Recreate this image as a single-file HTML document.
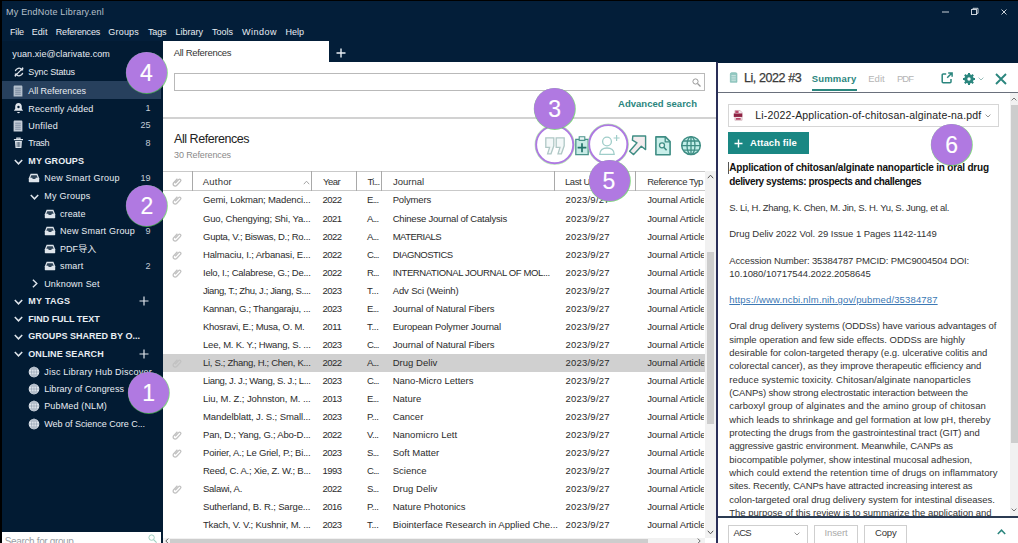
<!DOCTYPE html><html><head><meta charset="utf-8"><title>My EndNote Library.enl</title><style>
html,body{margin:0;padding:0;background:#021b33;}
#app{position:relative;width:1018px;height:543px;overflow:hidden;background:#021b33;font-family:"Liberation Sans","Noto Sans CJK SC",sans-serif;}
.t,.tn{position:absolute;white-space:nowrap;}
.b{position:absolute;}
svg{position:absolute;overflow:visible;}
.num{position:absolute;width:41px;height:41px;border-radius:50%;background:#b079e1;color:#fff;text-align:center;font-size:23px;line-height:42px;box-shadow:0.3px 0.4px 0 0.5px rgba(90,200,90,0.75);-webkit-text-stroke:0.15px #fff;}
.ring{position:absolute;border-radius:50%;background:rgba(255,255,255,0.5);border:1.9px solid #ae78e2;box-shadow:0 0 0 0.7px rgba(150,225,140,0.8);box-sizing:content-box;}

</style></head><body><div id="app">
<div class="b" style="left:0px;top:0px;width:1018px;height:41px;background:#031e39;"></div>
<div class="b" style="left:163px;top:41px;width:855px;height:21.5px;background:#031e39;"></div>
<div class="b" style="left:0px;top:0px;width:1018px;height:1.3px;background:#000;"></div>
<div class="b" style="left:0px;top:0px;width:1.6px;height:543px;background:#000;"></div>
<div class="b" style="left:715.3px;top:62.3px;width:3.1000000000000227px;height:480.7px;background:#2a2f58;"></div>
<div class="b" style="left:163.3px;top:41px;width:165.7px;height:22px;background:#fff;"></div>
<div class="b" style="left:163.3px;top:62.3px;width:552.3px;height:480.7px;background:#fff;"></div>
<div class="b" style="left:718.4px;top:62.6px;width:299.6px;height:480.4px;background:#fff;"></div>
<span class="t" style="left:6.0px;top:6.0px;font-size:9px;line-height:12px;color:#b7c0cb;letter-spacing:0.21px;">My EndNote Library.enl</span>
<span class="t" style="left:10.0px;top:25.7px;font-size:9px;line-height:12px;color:#e9eef4;letter-spacing:-0.13px;">File</span>
<span class="t" style="left:31.7px;top:25.7px;font-size:9px;line-height:12px;color:#e9eef4;letter-spacing:0.07px;">Edit</span>
<span class="t" style="left:55.8px;top:25.7px;font-size:9px;line-height:12px;color:#e9eef4;letter-spacing:-0.18px;">References</span>
<span class="t" style="left:108.3px;top:25.7px;font-size:9px;line-height:12px;color:#e9eef4;letter-spacing:0.20px;">Groups</span>
<span class="t" style="left:148.0px;top:25.7px;font-size:9px;line-height:12px;color:#e9eef4;letter-spacing:-0.13px;">Tags</span>
<span class="t" style="left:175.4px;top:25.7px;font-size:9px;line-height:12px;color:#e9eef4;letter-spacing:0.01px;">Library</span>
<span class="t" style="left:212.0px;top:25.7px;font-size:9px;line-height:12px;color:#e9eef4;">Tools</span>
<span class="t" style="left:242.0px;top:25.7px;font-size:9px;line-height:12px;color:#e9eef4;letter-spacing:0.50px;">Window</span>
<span class="t" style="left:285.6px;top:25.7px;font-size:9px;line-height:12px;color:#e9eef4;letter-spacing:-0.03px;">Help</span>
<svg style="left:940px;top:6px" width="70" height="12" viewBox="0 0 70 12"><g stroke="#c9d0d8" stroke-width="1" fill="none"><path d="M2 6h7"/><rect x="31.5" y="3.5" width="5" height="5"/><path d="M33 3.5v-1.2h5v5h-1.2"/><path d="M61.5 3.5l5 5M66.5 3.5l-5 5"/></g></svg>
<div class="b" style="left:1.6px;top:80.8px;width:159.9px;height:17.799999999999997px;background:#27405d;"></div>
<span class="t" style="left:12.3px;top:48.0px;font-size:9px;line-height:12px;color:#e9eef4;letter-spacing:0.09px;">yuan.xie@clarivate.com</span>
<span class="t" style="left:28.3px;top:65.5px;font-size:9px;line-height:12px;color:#e9eef4;letter-spacing:-0.12px;">Sync Status</span>
<span class="t" style="left:28.3px;top:84.5px;font-size:9px;line-height:12px;color:#e9eef4;letter-spacing:-0.06px;">All References</span>
<span class="t" style="left:28.3px;top:102.5px;font-size:9px;line-height:12px;color:#e9eef4;letter-spacing:0.15px;">Recently Added</span>
<span class="tn" style="right:867.5px;top:102.0px;font-size:9px;line-height:13px;color:#c3ccd6">1</span>
<span class="t" style="left:28.3px;top:119.7px;font-size:9px;line-height:12px;color:#e9eef4;letter-spacing:0.24px;">Unfiled</span>
<span class="tn" style="right:867.5px;top:119.2px;font-size:9px;line-height:13px;color:#c3ccd6">25</span>
<span class="t" style="left:28.3px;top:137.0px;font-size:9px;line-height:12px;color:#e9eef4;letter-spacing:-0.39px;">Trash</span>
<span class="tn" style="right:867.5px;top:136.5px;font-size:9px;line-height:13px;color:#c3ccd6">8</span>
<span class="t" style="left:28.3px;top:155.0px;font-size:9px;line-height:12px;color:#e9eef4;font-weight:700;letter-spacing:0.10px;">MY GROUPS</span>
<span class="t" style="left:44.2px;top:172.3px;font-size:9px;line-height:12px;color:#e9eef4;letter-spacing:0.23px;">New Smart Group</span>
<span class="tn" style="right:867.5px;top:171.8px;font-size:9px;line-height:13px;color:#c3ccd6">19</span>
<span class="t" style="left:44.2px;top:190.3px;font-size:9px;line-height:12px;color:#e9eef4;letter-spacing:0.25px;">My Groups</span>
<span class="t" style="left:60.0px;top:207.7px;font-size:9px;line-height:12px;color:#e9eef4;letter-spacing:0.08px;">create</span>
<span class="t" style="left:60.0px;top:225.3px;font-size:9px;line-height:12px;color:#e9eef4;letter-spacing:0.20px;">New Smart Group</span>
<span class="tn" style="right:867.5px;top:224.8px;font-size:9px;line-height:13px;color:#c3ccd6">9</span>
<span class="t" style="left:60.0px;top:242.7px;font-size:9px;line-height:12px;color:#e9eef4;letter-spacing:0.06px;">PDF导入</span>
<span class="t" style="left:60.0px;top:260.2px;font-size:9px;line-height:12px;color:#e9eef4;letter-spacing:0.16px;">smart</span>
<span class="tn" style="right:867.5px;top:259.7px;font-size:9px;line-height:13px;color:#c3ccd6">2</span>
<span class="t" style="left:44.2px;top:277.7px;font-size:9px;line-height:12px;color:#e9eef4;letter-spacing:0.18px;">Unknown Set</span>
<span class="t" style="left:28.3px;top:295.2px;font-size:9px;line-height:12px;color:#e9eef4;font-weight:700;letter-spacing:0.26px;">MY TAGS</span>
<span class="t" style="left:28.3px;top:312.5px;font-size:9px;line-height:12px;color:#e9eef4;font-weight:700;letter-spacing:-0.03px;">FIND FULL TEXT</span>
<span class="t" style="left:28.3px;top:330.3px;font-size:9px;line-height:12px;color:#e9eef4;font-weight:700;letter-spacing:0.02px;">GROUPS SHARED BY O...</span>
<span class="t" style="left:28.3px;top:347.7px;font-size:9px;line-height:12px;color:#e9eef4;font-weight:700;letter-spacing:0.07px;">ONLINE SEARCH</span>
<span class="t" style="left:44.2px;top:365.7px;font-size:9px;line-height:12px;color:#e9eef4;letter-spacing:0.23px;">Jisc Library Hub Discover</span>
<span class="t" style="left:44.2px;top:382.7px;font-size:9px;line-height:12px;color:#e9eef4;letter-spacing:0.07px;">Library of Congress</span>
<span class="t" style="left:44.2px;top:400.3px;font-size:9px;line-height:12px;color:#e9eef4;letter-spacing:0.15px;">PubMed (NLM)</span>
<span class="t" style="left:44.2px;top:417.8px;font-size:9px;line-height:12px;color:#e9eef4;letter-spacing:-0.02px;">Web of Science Core C...</span>
<div class="b" style="left:2px;top:531.5px;width:159px;height:11.5px;background:#fff;"></div>
<span class="t" style="left:4.8px;top:534.5px;font-size:10px;line-height:13px;color:#9aa0a6;letter-spacing:-0.36px;">Search for group</span>
<span class="t" style="left:173.8px;top:47.0px;font-size:9.5px;line-height:12px;color:#333;letter-spacing:-0.31px;">All References</span>
<svg style="left:336px;top:48px" width="10" height="10" viewBox="0 0 10 10"><path d="M5 0.5v9M0.5 5h9" stroke="#e9eef4" stroke-width="1.4"/></svg>
<div class="b" style="left:173.8px;top:73.3px;width:531.0px;height:17.700000000000003px;background:#fff;box-sizing:border-box;border:1px solid #b9b9b9;"></div>
<svg style="left:692px;top:78px" width="9" height="9" viewBox="0 0 9 9"><circle cx="3.5" cy="3.5" r="2.6" fill="none" stroke="#9a9a9a" stroke-width="1"/><path d="M5.5 5.5l3 3" stroke="#9a9a9a" stroke-width="1.2"/></svg>
<span class="t" style="left:618.0px;top:98.2px;font-size:9.5px;line-height:12px;color:#2a857d;font-weight:700;letter-spacing:0.02px;">Advanced search</span>
<div class="b" style="left:163.3px;top:117.3px;width:552.3px;height:1.5px;background:#d2d2d2;"></div>
<span class="t" style="left:174.0px;top:130.8px;font-size:12.5px;line-height:16px;color:#222;letter-spacing:-0.45px;">All References</span>
<span class="t" style="left:174.0px;top:149.3px;font-size:9px;line-height:12px;color:#8a8a8a;letter-spacing:-0.12px;">30 References</span>
<div class="b" style="left:163.3px;top:170.6px;width:541.7px;height:1.0px;background:#c9c9c9;"></div>
<div class="b" style="left:163.3px;top:190px;width:541.7px;height:1px;background:#c9c9c9;"></div>
<div class="b" style="left:192.1px;top:171px;width:1.0px;height:19.5px;background:#a9a9a9;"></div>
<div class="b" style="left:310.5px;top:171px;width:1.0px;height:19.5px;background:#a9a9a9;"></div>
<div class="b" style="left:356.2px;top:171px;width:1.0px;height:19.5px;background:#a9a9a9;"></div>
<div class="b" style="left:381.3px;top:171px;width:1.0px;height:19.5px;background:#a9a9a9;"></div>
<div class="b" style="left:554.1px;top:171px;width:1.0px;height:19.5px;background:#a9a9a9;"></div>
<div class="b" style="left:635.1px;top:171px;width:1.0px;height:19.5px;background:#a9a9a9;"></div>
<span class="t" style="left:202.8px;top:176.0px;font-size:9.5px;line-height:12px;color:#333;letter-spacing:0.20px;">Author</span>
<span class="t" style="left:323.0px;top:176.0px;font-size:9.5px;line-height:12px;color:#333;letter-spacing:-0.55px;">Year</span>
<span class="t" style="left:367.5px;top:176.0px;font-size:9.5px;line-height:12px;color:#333;letter-spacing:-0.70px;">Ti...</span>
<span class="t" style="left:393.0px;top:176.0px;font-size:9.5px;line-height:12px;color:#333;letter-spacing:-0.02px;">Journal</span>
<span class="t" style="left:565.0px;top:176.0px;font-size:9.5px;line-height:12px;color:#333;letter-spacing:-0.41px;">Last U</span>
<span class="t" style="left:647.2px;top:176.0px;font-size:9.5px;line-height:12px;color:#333;letter-spacing:-0.45px;">Reference Typ</span>
<div class="b" style="left:163.3px;top:354px;width:541.7px;height:18px;background:#d0d0d0;"></div>
<svg style="left:173px;top:195.4px" width="9" height="10" viewBox="0 0 9 10"><path d="M2.2 6.2l3.4-3.6a1.3 1.3 0 0 1 1.9 1.8L3.6 8.5a2 2 0 0 1-2.9-2.8L4.4 1.8" fill="none" stroke="#c2c2c2" stroke-width="1.300"/></svg>
<span class="t" style="left:203.0px;top:194.4px;font-size:9.5px;line-height:12px;color:#2b2b2b;letter-spacing:-0.14px;">Gemi, Lokman; Madenci...</span>
<span class="t" style="left:322.4px;top:194.4px;font-size:9.5px;line-height:12px;color:#2b2b2b;letter-spacing:-0.51px;">2022</span>
<span class="t" style="left:367.0px;top:194.4px;font-size:9.5px;line-height:12px;color:#2b2b2b;letter-spacing:-0.69px;">E...</span>
<span class="t" style="left:392.7px;top:194.4px;font-size:9.5px;line-height:12px;color:#2b2b2b;letter-spacing:-0.15px;">Polymers</span>
<span class="t" style="left:565.4px;top:194.4px;font-size:9.5px;line-height:12px;color:#2b2b2b;letter-spacing:0.24px;">2023/9/27</span>
<span class="t" style="left:647.2px;top:194.4px;font-size:9.5px;line-height:12px;color:#2b2b2b;letter-spacing:-0.09px;clip-path:inset(0 1.5px 0 0);">Journal Article</span>
<span class="t" style="left:203.0px;top:212.5px;font-size:9.5px;line-height:12px;color:#2b2b2b;letter-spacing:-0.16px;">Guo, Chengying; Shi, Ya...</span>
<span class="t" style="left:322.4px;top:212.5px;font-size:9.5px;line-height:12px;color:#2b2b2b;letter-spacing:-0.51px;">2021</span>
<span class="t" style="left:367.0px;top:212.5px;font-size:9.5px;line-height:12px;color:#2b2b2b;letter-spacing:-0.69px;">A...</span>
<span class="t" style="left:392.7px;top:212.5px;font-size:9.5px;line-height:12px;color:#2b2b2b;letter-spacing:-0.22px;">Chinese Journal of Catalysis</span>
<span class="t" style="left:565.4px;top:212.5px;font-size:9.5px;line-height:12px;color:#2b2b2b;letter-spacing:0.24px;">2023/9/27</span>
<span class="t" style="left:647.2px;top:212.5px;font-size:9.5px;line-height:12px;color:#2b2b2b;letter-spacing:-0.09px;clip-path:inset(0 1.5px 0 0);">Journal Article</span>
<svg style="left:173px;top:231.5px" width="9" height="10" viewBox="0 0 9 10"><path d="M2.2 6.2l3.4-3.6a1.3 1.3 0 0 1 1.9 1.8L3.6 8.5a2 2 0 0 1-2.9-2.8L4.4 1.8" fill="none" stroke="#c2c2c2" stroke-width="1.300"/></svg>
<span class="t" style="left:203.0px;top:230.5px;font-size:9.5px;line-height:12px;color:#2b2b2b;letter-spacing:-0.26px;">Gupta, V.; Biswas, D.; Ro...</span>
<span class="t" style="left:322.4px;top:230.5px;font-size:9.5px;line-height:12px;color:#2b2b2b;letter-spacing:-0.51px;">2022</span>
<span class="t" style="left:367.0px;top:230.5px;font-size:9.5px;line-height:12px;color:#2b2b2b;letter-spacing:-0.69px;">A...</span>
<span class="t" style="left:392.7px;top:230.5px;font-size:9.5px;line-height:12px;color:#2b2b2b;letter-spacing:-0.53px;">MATERIALS</span>
<span class="t" style="left:565.4px;top:230.5px;font-size:9.5px;line-height:12px;color:#2b2b2b;letter-spacing:0.24px;">2023/9/27</span>
<span class="t" style="left:647.2px;top:230.5px;font-size:9.5px;line-height:12px;color:#2b2b2b;letter-spacing:-0.09px;clip-path:inset(0 1.5px 0 0);">Journal Article</span>
<svg style="left:173px;top:249.55px" width="9" height="10" viewBox="0 0 9 10"><path d="M2.2 6.2l3.4-3.6a1.3 1.3 0 0 1 1.9 1.8L3.6 8.5a2 2 0 0 1-2.9-2.8L4.4 1.8" fill="none" stroke="#c2c2c2" stroke-width="1.300"/></svg>
<span class="t" style="left:203.0px;top:248.6px;font-size:9.5px;line-height:12px;color:#2b2b2b;letter-spacing:-0.16px;">Halmaciu, I.; Arbanasi, E...</span>
<span class="t" style="left:322.4px;top:248.6px;font-size:9.5px;line-height:12px;color:#2b2b2b;letter-spacing:-0.51px;">2022</span>
<span class="t" style="left:367.0px;top:248.6px;font-size:9.5px;line-height:12px;color:#2b2b2b;letter-spacing:-0.82px;">C...</span>
<span class="t" style="left:392.7px;top:248.6px;font-size:9.5px;line-height:12px;color:#2b2b2b;letter-spacing:-0.50px;">DIAGNOSTICS</span>
<span class="t" style="left:565.4px;top:248.6px;font-size:9.5px;line-height:12px;color:#2b2b2b;letter-spacing:0.24px;">2023/9/27</span>
<span class="t" style="left:647.2px;top:248.6px;font-size:9.5px;line-height:12px;color:#2b2b2b;letter-spacing:-0.09px;clip-path:inset(0 1.5px 0 0);">Journal Article</span>
<svg style="left:173px;top:267.6px" width="9" height="10" viewBox="0 0 9 10"><path d="M2.2 6.2l3.4-3.6a1.3 1.3 0 0 1 1.9 1.8L3.6 8.5a2 2 0 0 1-2.9-2.8L4.4 1.8" fill="none" stroke="#c2c2c2" stroke-width="1.300"/></svg>
<span class="t" style="left:203.0px;top:266.6px;font-size:9.5px;line-height:12px;color:#2b2b2b;letter-spacing:-0.25px;">Ielo, I.; Calabrese, G.; De...</span>
<span class="t" style="left:322.4px;top:266.6px;font-size:9.5px;line-height:12px;color:#2b2b2b;letter-spacing:-0.51px;">2022</span>
<span class="t" style="left:367.0px;top:266.6px;font-size:9.5px;line-height:12px;color:#2b2b2b;letter-spacing:-0.82px;">R...</span>
<span class="t" style="left:392.7px;top:266.6px;font-size:9.5px;line-height:12px;color:#2b2b2b;letter-spacing:-0.37px;">INTERNATIONAL JOURNAL OF MOL...</span>
<span class="t" style="left:565.4px;top:266.6px;font-size:9.5px;line-height:12px;color:#2b2b2b;letter-spacing:0.24px;">2023/9/27</span>
<span class="t" style="left:647.2px;top:266.6px;font-size:9.5px;line-height:12px;color:#2b2b2b;letter-spacing:-0.09px;clip-path:inset(0 1.5px 0 0);">Journal Article</span>
<span class="t" style="left:203.0px;top:284.6px;font-size:9.5px;line-height:12px;color:#2b2b2b;letter-spacing:-0.38px;">Jiang, T.; Zhu, J.; Jiang, S....</span>
<span class="t" style="left:322.4px;top:284.6px;font-size:9.5px;line-height:12px;color:#2b2b2b;letter-spacing:-0.51px;">2023</span>
<span class="t" style="left:367.0px;top:284.6px;font-size:9.5px;line-height:12px;color:#2b2b2b;letter-spacing:-0.29px;">T...</span>
<span class="t" style="left:392.7px;top:284.6px;font-size:9.5px;line-height:12px;color:#2b2b2b;letter-spacing:-0.14px;">Adv Sci (Weinh)</span>
<span class="t" style="left:565.4px;top:284.6px;font-size:9.5px;line-height:12px;color:#2b2b2b;letter-spacing:0.24px;">2023/9/27</span>
<span class="t" style="left:647.2px;top:284.6px;font-size:9.5px;line-height:12px;color:#2b2b2b;letter-spacing:-0.09px;clip-path:inset(0 1.5px 0 0);">Journal Article</span>
<span class="t" style="left:203.0px;top:302.7px;font-size:9.5px;line-height:12px;color:#2b2b2b;letter-spacing:-0.26px;">Kannan, G.; Thangaraju, ...</span>
<span class="t" style="left:322.4px;top:302.7px;font-size:9.5px;line-height:12px;color:#2b2b2b;letter-spacing:-0.51px;">2023</span>
<span class="t" style="left:367.0px;top:302.7px;font-size:9.5px;line-height:12px;color:#2b2b2b;letter-spacing:-0.69px;">E...</span>
<span class="t" style="left:392.7px;top:302.7px;font-size:9.5px;line-height:12px;color:#2b2b2b;letter-spacing:-0.09px;">Journal of Natural Fibers</span>
<span class="t" style="left:565.4px;top:302.7px;font-size:9.5px;line-height:12px;color:#2b2b2b;letter-spacing:0.24px;">2023/9/27</span>
<span class="t" style="left:647.2px;top:302.7px;font-size:9.5px;line-height:12px;color:#2b2b2b;letter-spacing:-0.09px;clip-path:inset(0 1.5px 0 0);">Journal Article</span>
<span class="t" style="left:203.0px;top:320.8px;font-size:9.5px;line-height:12px;color:#2b2b2b;letter-spacing:-0.27px;">Khosravi, E.; Musa, O. M.</span>
<span class="t" style="left:322.4px;top:320.8px;font-size:9.5px;line-height:12px;color:#2b2b2b;letter-spacing:-0.33px;">2011</span>
<span class="t" style="left:367.0px;top:320.8px;font-size:9.5px;line-height:12px;color:#2b2b2b;letter-spacing:-0.29px;">T...</span>
<span class="t" style="left:392.7px;top:320.8px;font-size:9.5px;line-height:12px;color:#2b2b2b;letter-spacing:-0.18px;">European Polymer Journal</span>
<span class="t" style="left:565.4px;top:320.8px;font-size:9.5px;line-height:12px;color:#2b2b2b;letter-spacing:0.24px;">2023/9/27</span>
<span class="t" style="left:647.2px;top:320.8px;font-size:9.5px;line-height:12px;color:#2b2b2b;letter-spacing:-0.09px;clip-path:inset(0 1.5px 0 0);">Journal Article</span>
<span class="t" style="left:203.0px;top:338.8px;font-size:9.5px;line-height:12px;color:#2b2b2b;letter-spacing:-0.20px;">Lee, M. K. Y.; Hwang, S. ...</span>
<span class="t" style="left:322.4px;top:338.8px;font-size:9.5px;line-height:12px;color:#2b2b2b;letter-spacing:-0.51px;">2023</span>
<span class="t" style="left:367.0px;top:338.8px;font-size:9.5px;line-height:12px;color:#2b2b2b;letter-spacing:-0.82px;">C...</span>
<span class="t" style="left:392.7px;top:338.8px;font-size:9.5px;line-height:12px;color:#2b2b2b;letter-spacing:-0.09px;">Journal of Natural Fibers</span>
<span class="t" style="left:565.4px;top:338.8px;font-size:9.5px;line-height:12px;color:#2b2b2b;letter-spacing:0.24px;">2023/9/27</span>
<span class="t" style="left:647.2px;top:338.8px;font-size:9.5px;line-height:12px;color:#2b2b2b;letter-spacing:-0.09px;clip-path:inset(0 1.5px 0 0);">Journal Article</span>
<svg style="left:173px;top:357.85px" width="9" height="10" viewBox="0 0 9 10"><path d="M2.2 6.2l3.4-3.6a1.3 1.3 0 0 1 1.9 1.8L3.6 8.5a2 2 0 0 1-2.9-2.8L4.4 1.8" fill="none" stroke="#c2c2c2" stroke-width="1.300"/></svg>
<span class="t" style="left:203.0px;top:356.9px;font-size:9.5px;line-height:12px;color:#2b2b2b;letter-spacing:-0.30px;">Li, S.; Zhang, H.; Chen, K...</span>
<span class="t" style="left:322.4px;top:356.9px;font-size:9.5px;line-height:12px;color:#2b2b2b;letter-spacing:-0.51px;">2022</span>
<span class="t" style="left:367.0px;top:356.9px;font-size:9.5px;line-height:12px;color:#2b2b2b;letter-spacing:-0.69px;">A...</span>
<span class="t" style="left:392.7px;top:356.9px;font-size:9.5px;line-height:12px;color:#2b2b2b;letter-spacing:0.03px;">Drug Deliv</span>
<span class="t" style="left:565.4px;top:356.9px;font-size:9.5px;line-height:12px;color:#2b2b2b;letter-spacing:0.24px;">2023/9/27</span>
<span class="t" style="left:647.2px;top:356.9px;font-size:9.5px;line-height:12px;color:#2b2b2b;letter-spacing:-0.09px;clip-path:inset(0 1.5px 0 0);">Journal Article</span>
<span class="t" style="left:203.0px;top:374.9px;font-size:9.5px;line-height:12px;color:#2b2b2b;letter-spacing:-0.35px;">Liang, J. J.; Wang, S. J.; L...</span>
<span class="t" style="left:322.4px;top:374.9px;font-size:9.5px;line-height:12px;color:#2b2b2b;letter-spacing:-0.51px;">2023</span>
<span class="t" style="left:367.0px;top:374.9px;font-size:9.5px;line-height:12px;color:#2b2b2b;letter-spacing:-0.82px;">C...</span>
<span class="t" style="left:392.7px;top:374.9px;font-size:9.5px;line-height:12px;color:#2b2b2b;">Nano-Micro Letters</span>
<span class="t" style="left:565.4px;top:374.9px;font-size:9.5px;line-height:12px;color:#2b2b2b;letter-spacing:0.24px;">2023/9/27</span>
<span class="t" style="left:647.2px;top:374.9px;font-size:9.5px;line-height:12px;color:#2b2b2b;letter-spacing:-0.09px;clip-path:inset(0 1.5px 0 0);">Journal Article</span>
<span class="t" style="left:203.0px;top:393.0px;font-size:9.5px;line-height:12px;color:#2b2b2b;letter-spacing:-0.08px;">Liu, M. Z.; Johnston, M. ...</span>
<span class="t" style="left:322.4px;top:393.0px;font-size:9.5px;line-height:12px;color:#2b2b2b;letter-spacing:-0.51px;">2013</span>
<span class="t" style="left:367.0px;top:393.0px;font-size:9.5px;line-height:12px;color:#2b2b2b;letter-spacing:-0.69px;">E...</span>
<span class="t" style="left:392.7px;top:393.0px;font-size:9.5px;line-height:12px;color:#2b2b2b;">Nature</span>
<span class="t" style="left:565.4px;top:393.0px;font-size:9.5px;line-height:12px;color:#2b2b2b;letter-spacing:0.24px;">2023/9/27</span>
<span class="t" style="left:647.2px;top:393.0px;font-size:9.5px;line-height:12px;color:#2b2b2b;letter-spacing:-0.09px;clip-path:inset(0 1.5px 0 0);">Journal Article</span>
<span class="t" style="left:203.0px;top:411.0px;font-size:9.5px;line-height:12px;color:#2b2b2b;letter-spacing:-0.10px;">Mandelblatt, J. S.; Small...</span>
<span class="t" style="left:322.4px;top:411.0px;font-size:9.5px;line-height:12px;color:#2b2b2b;letter-spacing:-0.51px;">2023</span>
<span class="t" style="left:367.0px;top:411.0px;font-size:9.5px;line-height:12px;color:#2b2b2b;letter-spacing:-0.38px;">P...</span>
<span class="t" style="left:392.7px;top:411.0px;font-size:9.5px;line-height:12px;color:#2b2b2b;">Cancer</span>
<span class="t" style="left:565.4px;top:411.0px;font-size:9.5px;line-height:12px;color:#2b2b2b;letter-spacing:0.24px;">2023/9/27</span>
<span class="t" style="left:647.2px;top:411.0px;font-size:9.5px;line-height:12px;color:#2b2b2b;letter-spacing:-0.09px;clip-path:inset(0 1.5px 0 0);">Journal Article</span>
<svg style="left:173px;top:430.05px" width="9" height="10" viewBox="0 0 9 10"><path d="M2.2 6.2l3.4-3.6a1.3 1.3 0 0 1 1.9 1.8L3.6 8.5a2 2 0 0 1-2.9-2.8L4.4 1.8" fill="none" stroke="#c2c2c2" stroke-width="1.300"/></svg>
<span class="t" style="left:203.0px;top:429.1px;font-size:9.5px;line-height:12px;color:#2b2b2b;letter-spacing:-0.21px;">Pan, D.; Yang, G.; Abo-D...</span>
<span class="t" style="left:322.4px;top:429.1px;font-size:9.5px;line-height:12px;color:#2b2b2b;letter-spacing:-0.51px;">2022</span>
<span class="t" style="left:367.0px;top:429.1px;font-size:9.5px;line-height:12px;color:#2b2b2b;letter-spacing:-0.47px;">V...</span>
<span class="t" style="left:392.7px;top:429.1px;font-size:9.5px;line-height:12px;color:#2b2b2b;">Nanomicro Lett</span>
<span class="t" style="left:565.4px;top:429.1px;font-size:9.5px;line-height:12px;color:#2b2b2b;letter-spacing:0.24px;">2023/9/27</span>
<span class="t" style="left:647.2px;top:429.1px;font-size:9.5px;line-height:12px;color:#2b2b2b;letter-spacing:-0.09px;clip-path:inset(0 1.5px 0 0);">Journal Article</span>
<svg style="left:173px;top:448.1px" width="9" height="10" viewBox="0 0 9 10"><path d="M2.2 6.2l3.4-3.6a1.3 1.3 0 0 1 1.9 1.8L3.6 8.5a2 2 0 0 1-2.9-2.8L4.4 1.8" fill="none" stroke="#c2c2c2" stroke-width="1.300"/></svg>
<span class="t" style="left:203.0px;top:447.1px;font-size:9.5px;line-height:12px;color:#2b2b2b;letter-spacing:-0.20px;">Poirier, A.; Le Griel, P.; Bi...</span>
<span class="t" style="left:322.4px;top:447.1px;font-size:9.5px;line-height:12px;color:#2b2b2b;letter-spacing:-0.51px;">2023</span>
<span class="t" style="left:367.0px;top:447.1px;font-size:9.5px;line-height:12px;color:#2b2b2b;letter-spacing:-0.69px;">S...</span>
<span class="t" style="left:392.7px;top:447.1px;font-size:9.5px;line-height:12px;color:#2b2b2b;">Soft Matter</span>
<span class="t" style="left:565.4px;top:447.1px;font-size:9.5px;line-height:12px;color:#2b2b2b;letter-spacing:0.24px;">2023/9/27</span>
<span class="t" style="left:647.2px;top:447.1px;font-size:9.5px;line-height:12px;color:#2b2b2b;letter-spacing:-0.09px;clip-path:inset(0 1.5px 0 0);">Journal Article</span>
<span class="t" style="left:203.0px;top:465.1px;font-size:9.5px;line-height:12px;color:#2b2b2b;letter-spacing:-0.24px;">Reed, C. A.; Xie, Z. W.; B...</span>
<span class="t" style="left:322.4px;top:465.1px;font-size:9.5px;line-height:12px;color:#2b2b2b;letter-spacing:-0.51px;">1993</span>
<span class="t" style="left:367.0px;top:465.1px;font-size:9.5px;line-height:12px;color:#2b2b2b;letter-spacing:-0.82px;">C...</span>
<span class="t" style="left:392.7px;top:465.1px;font-size:9.5px;line-height:12px;color:#2b2b2b;">Science</span>
<span class="t" style="left:565.4px;top:465.1px;font-size:9.5px;line-height:12px;color:#2b2b2b;letter-spacing:0.24px;">2023/9/27</span>
<span class="t" style="left:647.2px;top:465.1px;font-size:9.5px;line-height:12px;color:#2b2b2b;letter-spacing:-0.09px;clip-path:inset(0 1.5px 0 0);">Journal Article</span>
<svg style="left:173px;top:484.20000000000005px" width="9" height="10" viewBox="0 0 9 10"><path d="M2.2 6.2l3.4-3.6a1.3 1.3 0 0 1 1.9 1.8L3.6 8.5a2 2 0 0 1-2.9-2.8L4.4 1.8" fill="none" stroke="#c2c2c2" stroke-width="1.300"/></svg>
<span class="t" style="left:203.0px;top:483.2px;font-size:9.5px;line-height:12px;color:#2b2b2b;letter-spacing:-0.27px;">Salawi, A.</span>
<span class="t" style="left:322.4px;top:483.2px;font-size:9.5px;line-height:12px;color:#2b2b2b;letter-spacing:-0.51px;">2022</span>
<span class="t" style="left:367.0px;top:483.2px;font-size:9.5px;line-height:12px;color:#2b2b2b;letter-spacing:-0.69px;">S...</span>
<span class="t" style="left:392.7px;top:483.2px;font-size:9.5px;line-height:12px;color:#2b2b2b;letter-spacing:0.03px;">Drug Deliv</span>
<span class="t" style="left:565.4px;top:483.2px;font-size:9.5px;line-height:12px;color:#2b2b2b;letter-spacing:0.24px;">2023/9/27</span>
<span class="t" style="left:647.2px;top:483.2px;font-size:9.5px;line-height:12px;color:#2b2b2b;letter-spacing:-0.09px;clip-path:inset(0 1.5px 0 0);">Journal Article</span>
<span class="t" style="left:203.0px;top:501.2px;font-size:9.5px;line-height:12px;color:#2b2b2b;letter-spacing:-0.13px;">Sutherland, B. R.; Sarge...</span>
<span class="t" style="left:322.4px;top:501.2px;font-size:9.5px;line-height:12px;color:#2b2b2b;letter-spacing:-0.51px;">2016</span>
<span class="t" style="left:367.0px;top:501.2px;font-size:9.5px;line-height:12px;color:#2b2b2b;letter-spacing:-0.38px;">P...</span>
<span class="t" style="left:392.7px;top:501.2px;font-size:9.5px;line-height:12px;color:#2b2b2b;">Nature Photonics</span>
<span class="t" style="left:565.4px;top:501.2px;font-size:9.5px;line-height:12px;color:#2b2b2b;letter-spacing:0.24px;">2023/9/27</span>
<span class="t" style="left:647.2px;top:501.2px;font-size:9.5px;line-height:12px;color:#2b2b2b;letter-spacing:-0.09px;clip-path:inset(0 1.5px 0 0);">Journal Article</span>
<span class="t" style="left:203.0px;top:519.3px;font-size:9.5px;line-height:12px;color:#2b2b2b;letter-spacing:-0.20px;">Tkach, V. V.; Kushnir, M. ...</span>
<span class="t" style="left:322.4px;top:519.3px;font-size:9.5px;line-height:12px;color:#2b2b2b;letter-spacing:-0.51px;">2023</span>
<span class="t" style="left:367.0px;top:519.3px;font-size:9.5px;line-height:12px;color:#2b2b2b;letter-spacing:-0.29px;">T...</span>
<span class="t" style="left:392.7px;top:519.3px;font-size:9.5px;line-height:12px;color:#2b2b2b;">Biointerface Research in Applied Che...</span>
<span class="t" style="left:565.4px;top:519.3px;font-size:9.5px;line-height:12px;color:#2b2b2b;letter-spacing:0.24px;">2023/9/27</span>
<span class="t" style="left:647.2px;top:519.3px;font-size:9.5px;line-height:12px;color:#2b2b2b;letter-spacing:-0.09px;clip-path:inset(0 1.5px 0 0);">Journal Article</span>
<div class="b" style="left:705px;top:171px;width:10.600000000000023px;height:367px;background:#f1f1f1;"></div>
<div class="b" style="left:706.5px;top:252px;width:7.5px;height:172px;background:#cdcdcd;"></div>
<svg style="left:707px;top:174px" width="7" height="5" viewBox="0 0 7 5"><path d="M0.8 4.2L3.5 1.2l2.7 3" fill="none" stroke="#555" stroke-width="1"/></svg>
<svg style="left:707px;top:530px" width="7" height="5" viewBox="0 0 7 5"><path d="M0.8 0.8L3.5 3.8l2.7-3" fill="none" stroke="#555" stroke-width="1"/></svg>
<div class="b" style="left:163.3px;top:537.5px;width:541.7px;height:5.5px;background:#f1f1f1;"></div>
<div class="b" style="left:170px;top:539px;width:478px;height:4px;background:#cdcdcd;"></div>
<svg style="left:164.5px;top:538px" width="4" height="6" viewBox="0 0 4 6"><path d="M3.2 0.6L0.8 3l2.4 2.4" fill="none" stroke="#555" stroke-width="0.9"/></svg>
<svg style="left:697px;top:538px" width="4" height="6" viewBox="0 0 4 6"><path d="M0.8 0.6L3.2 3l-2.4 2.4" fill="none" stroke="#555" stroke-width="0.9"/></svg>
<div class="b" style="left:718.4px;top:92.3px;width:299.6px;height:1.2000000000000028px;background:#6a707c;"></div>
<svg style="left:728.800px;top:72.200px" width="9.300" height="11.300" viewBox="0 0 10 13"><path d="M1.2 2.2c0-.8.6-1.4 1.4-1.4h4.8c.8 0 1.4.6 1.4 1.4v9.6H1.2z" fill="#93c8c1" stroke="#7dbab2" stroke-width="0.800"/><path d="M2.5 4h5M2.5 6h5M2.5 8h5M2.5 10h5" stroke="#e8f4f2" stroke-width="0.7"/></svg>
<span class="t" style="left:743.9px;top:70.3px;font-size:12.5px;line-height:16px;color:#3a3a3a;letter-spacing:-0.41px;-webkit-text-stroke:0.250px #3a3a3a;">Li, 2022 #3</span>
<span class="t" style="left:811.7px;top:72.5px;font-size:9.5px;line-height:12px;color:#2b867e;font-weight:700;letter-spacing:0.20px;">Summary</span>
<div class="b" style="left:811.5px;top:89px;width:45.0px;height:2px;background:#2b867e;"></div>
<span class="t" style="left:868.3px;top:72.5px;font-size:9.5px;line-height:12px;color:#b5b5b5;letter-spacing:-0.02px;">Edit</span>
<span class="t" style="left:897.0px;top:72.5px;font-size:9.5px;line-height:12px;color:#b5b5b5;letter-spacing:-1.00px;">PDF</span>
<svg style="left:941px;top:72px" width="12" height="12" viewBox="0 0 12 12"><path d="M5.2 2H2.2a1 1 0 0 0-1 1v6.8a1 1 0 0 0 1 1H9a1 1 0 0 0 1-1V6.9" fill="none" stroke="#2b867e" stroke-width="1.5"/><path d="M6.2 5.8L11 1M7.2 0.9h3.9v3.9" fill="none" stroke="#2b867e" stroke-width="1.5"/></svg>
<svg style="left:962.5px;top:72.5px" width="12" height="12" viewBox="0 0 12 12"><circle cx="6" cy="6" r="3.4" fill="none" stroke="#2b867e" stroke-width="2.6"/><g stroke="#2b867e" stroke-width="2"><path d="M6 0v12M0 6h12M1.8 1.8l8.4 8.4M10.2 1.8l-8.4 8.4"/></g><circle cx="6" cy="6" r="1.7" fill="#fff"/></svg>
<svg style="left:977.5px;top:76.5px" width="6" height="4" viewBox="0 0 6 4"><path d="M0.6 0.6L3 3l2.4-2.4" fill="none" stroke="#8fb9b4" stroke-width="0.9"/></svg>
<svg style="left:995px;top:72.5px" width="12" height="12" viewBox="0 0 12 12"><path d="M1 1l10 10M11 1L1 11" stroke="#2b867e" stroke-width="1.9"/></svg>
<div class="b" style="left:1009.6px;top:93.4px;width:8.399999999999977px;height:423.1px;background:#f1f1f1;"></div>
<div class="b" style="left:1010.5px;top:104.6px;width:7.5px;height:338.4px;background:#cdcdcd;"></div>
<svg style="left:1011px;top:96.5px" width="6" height="4" viewBox="0 0 6 4"><path d="M0.6 3.4L3 1l2.4 2.4" fill="none" stroke="#666" stroke-width="0.9"/></svg>
<svg style="left:1011px;top:508px" width="6" height="4" viewBox="0 0 6 4"><path d="M0.6 0.6L3 3l2.4-2.4" fill="none" stroke="#666" stroke-width="0.9"/></svg>
<div class="b" style="left:727.5px;top:104.2px;width:271.70000000000005px;height:22.39999999999999px;background:#fff;box-sizing:border-box;border:1px solid #d6d6d6;"></div>
<svg style="left:733.400px;top:109.800px" width="10.600" height="10.600" viewBox="0 0 11 11"><path d="M2 0.500h5.400L9.400 2.600v8H2z" fill="#f4e6ea" stroke="#c9a3ae" stroke-width="0.700"/><rect x="0.800" y="3.600" width="8.800" height="3.600" fill="#8e2344"/><path d="M2.400 0.800h3.400v2.400H2.400zM3 8.200h5v2H3z" fill="#b8486a"/></svg>
<span class="t" style="left:755.2px;top:108.0px;font-size:10.5px;line-height:14px;color:#222;letter-spacing:0.18px;">Li-2022-Application-of-chitosan-alginate-na.pdf</span>
<svg style="left:985px;top:113.5px" width="6" height="4" viewBox="0 0 6 4"><path d="M0.6 0.6L3 3l2.4-2.4" fill="none" stroke="#888" stroke-width="0.9"/></svg>
<div class="b" style="left:727.5px;top:132.3px;width:81.29999999999995px;height:21.5px;background:#1a8783;"></div>
<svg style="left:734px;top:139px" width="9" height="9" viewBox="0 0 9 9"><path d="M4.5 0.5v8M0.5 4.5h8" stroke="#fff" stroke-width="1.4"/></svg>
<span class="t" style="left:750.0px;top:137.3px;font-size:9.5px;line-height:12px;color:#fff;font-weight:700;letter-spacing:0.08px;">Attach file</span>
<div class="b" style="left:727.8px;top:161.5px;width:0.8000000000000682px;height:12.5px;background:#555;"></div>
<span class="t" style="left:729.3px;top:161.2px;font-size:10px;line-height:13px;color:#111;font-weight:700;letter-spacing:-0.20px;">Application of chitosan/alginate nanoparticle in oral drug</span>
<span class="t" style="left:729.3px;top:174.6px;font-size:10px;line-height:13px;color:#111;font-weight:700;letter-spacing:-0.42px;">delivery systems: prospects and challenges</span>
<span class="t" style="left:729.3px;top:201.9px;font-size:9.5px;line-height:12px;color:#333;letter-spacing:-0.29px;">S. Li, H. Zhang, K. Chen, M. Jin, S. H. Yu, S. Jung, et al.</span>
<span class="t" style="left:729.3px;top:228.0px;font-size:9.5px;line-height:12px;color:#333;letter-spacing:-0.04px;">Drug Deliv 2022 Vol. 29 Issue 1 Pages 1142-1149</span>
<span class="t" style="left:729.3px;top:254.8px;font-size:9.5px;line-height:12px;color:#333;letter-spacing:-0.13px;">Accession Number: 35384787 PMCID: PMC9004504 DOI:</span>
<span class="t" style="left:729.3px;top:267.9px;font-size:9.5px;line-height:12px;color:#333;letter-spacing:-0.04px;">10.1080/10717544.2022.2058645</span>
<span class="t" style="left:729.3px;top:294.1px;font-size:9.5px;line-height:12px;color:#3b78b4;letter-spacing:0.15px;text-decoration:underline;">https://www.ncbi.nlm.nih.gov/pubmed/35384787</span>
<span class="t" style="left:729.3px;top:320.3px;font-size:9.5px;line-height:12px;color:#333;letter-spacing:-0.09px;">Oral drug delivery systems (ODDSs) have various advantages of</span>
<span class="t" style="left:729.3px;top:333.6px;font-size:9.5px;line-height:12px;color:#333;letter-spacing:-0.03px;">simple operation and few side effects. ODDSs are highly</span>
<span class="t" style="left:729.3px;top:346.9px;font-size:9.5px;line-height:12px;color:#333;letter-spacing:-0.03px;">desirable for colon-targeted therapy (e.g. ulcerative colitis and</span>
<span class="t" style="left:729.3px;top:360.3px;font-size:9.5px;line-height:12px;color:#333;letter-spacing:-0.09px;">colorectal cancer), as they improve therapeutic efficiency and</span>
<span class="t" style="left:729.3px;top:373.6px;font-size:9.5px;line-height:12px;color:#333;letter-spacing:0.07px;">reduce systemic toxicity. Chitosan/alginate nanoparticles</span>
<span class="t" style="left:729.3px;top:386.9px;font-size:9.5px;line-height:12px;color:#333;letter-spacing:-0.12px;">(CANPs) show strong electrostatic interaction between the</span>
<span class="t" style="left:729.3px;top:400.2px;font-size:9.5px;line-height:12px;color:#333;letter-spacing:0.08px;">carboxyl group of alginates and the amino group of chitosan</span>
<span class="t" style="left:729.3px;top:413.5px;font-size:9.5px;line-height:12px;color:#333;letter-spacing:0.03px;">which leads to shrinkage and gel formation at low pH, thereby</span>
<span class="t" style="left:729.3px;top:426.9px;font-size:9.5px;line-height:12px;color:#333;letter-spacing:-0.03px;">protecting the drugs from the gastrointestinal tract (GIT) and</span>
<span class="t" style="left:729.3px;top:440.2px;font-size:9.5px;line-height:12px;color:#333;letter-spacing:-0.15px;">aggressive gastric environment. Meanwhile, CANPs as</span>
<span class="t" style="left:729.3px;top:453.5px;font-size:9.5px;line-height:12px;color:#333;letter-spacing:-0.02px;">biocompatible polymer, show intestinal mucosal adhesion,</span>
<span class="t" style="left:729.3px;top:466.8px;font-size:9.5px;line-height:12px;color:#333;letter-spacing:0.07px;">which could extend the retention time of drugs on inflammatory</span>
<span class="t" style="left:729.3px;top:480.1px;font-size:9.5px;line-height:12px;color:#333;letter-spacing:-0.16px;">sites. Recently, CANPs have attracted increasing interest as</span>
<span class="t" style="left:729.3px;top:493.5px;font-size:9.5px;line-height:12px;color:#333;">colon-targeted oral drug delivery system for intestinal diseases.</span>
<span class="t" style="left:729.3px;top:506.8px;font-size:9.5px;line-height:12px;color:#333;letter-spacing:-0.01px;">The purpose of this review is to summarize the application and</span>
<div class="b" style="left:718.4px;top:516.5px;width:299.6px;height:26.5px;background:#fff;"></div>
<div class="b" style="left:718.4px;top:516.3px;width:299.6px;height:1.5px;background:#2b3b52;"></div>
<div class="b" style="left:728.4px;top:524.6px;width:79.60000000000002px;height:21.399999999999977px;background:#fff;box-sizing:border-box;border:1px solid #cfcfcf;"></div>
<span class="t" style="left:733.5px;top:527.3px;font-size:9.5px;line-height:12px;color:#333;letter-spacing:-0.68px;">ACS</span>
<svg style="left:794px;top:531.5px" width="6" height="4" viewBox="0 0 6 4"><path d="M0.6 0.6L3 3l2.4-2.4" fill="none" stroke="#888" stroke-width="0.9"/></svg>
<div class="b" style="left:813.8px;top:524.6px;width:44.200000000000045px;height:21.399999999999977px;background:#fff;box-sizing:border-box;border:1px solid #cfcfcf;"></div>
<span class="t" style="left:824.5px;top:527.3px;font-size:9.5px;line-height:12px;color:#aaa;letter-spacing:-0.14px;">Insert</span>
<div class="b" style="left:863.8px;top:524.6px;width:43.200000000000045px;height:21.399999999999977px;background:#fff;box-sizing:border-box;border:1px solid #cfcfcf;"></div>
<span class="t" style="left:875.0px;top:527.3px;font-size:9.5px;line-height:12px;color:#333;letter-spacing:-0.17px;">Copy</span>
<svg style="left:996.5px;top:529px" width="9" height="6" viewBox="0 0 9 6"><path d="M0.8 5L4.5 1.2 8.2 5" fill="none" stroke="#2b867e" stroke-width="1.5"/></svg>
<svg style="left:13.5px;top:66.5px" width="10" height="10" viewBox="0 0 10 10"><path d="M1.3 4.2A3.8 3.8 0 0 1 8 2.6M8.7 5.8A3.8 3.8 0 0 1 2 7.4" fill="none" stroke="#dfe5ec" stroke-width="1.3"/><path d="M8.6 0.6v2.4H6.2M1.4 9.4V7h2.4" fill="none" stroke="#dfe5ec" stroke-width="1.1"/><path d="M0.8 9.2L9.2 0.8" stroke="#dfe5ec" stroke-width="1.2"/></svg>
<svg style="left:13px;top:84.5px" width="10" height="12" viewBox="0 0 10 12"><path d="M0.6 1.8c0-.7.5-1.200 1.200-1.200h6.400c.7 0 1.200.5 1.200 1.200v9.600H0.600z" fill="#b4c0cd" opacity="1"/><path d="M2.200 3.200h5.600M2.200 5.200h5.600M2.200 7.200h5.600M2.200 9.200h5.600" stroke="#5b7088" stroke-width="0.700"/></svg>
<svg style="left:12.8px;top:102.3px" width="11" height="12.1" viewBox="0 0 10 11"><path d="M5 0.8c-1.9 0-3 1.4-3 3.2v2.2L0.8 8h8.4L8 6.200V4c0-1.800-1.100-3.200-3-3.200z" fill="#dfe5ec"/><path d="M3.8 9a1.200 1.200 0 0 0 2.400 0z" fill="#dfe5ec"/><circle cx="5" cy="4.600" r="1.100" fill="#021b33"/></svg>
<svg style="left:13px;top:119.8px" width="10" height="12" viewBox="0 0 10 12"><path d="M0.6 1.8c0-.7.5-1.200 1.200-1.200h6.400c.7 0 1.200.5 1.200 1.200v9.600H0.600z" fill="#c4cdd8" opacity="1"/><path d="M2.200 3.200h5.600M2.200 5.200h5.600M2.200 7.200h5.600M2.200 9.200h5.600" stroke="#5b7088" stroke-width="0.700"/></svg>
<svg style="left:12.6px;top:137.2px" width="10.9" height="12" viewBox="0 0 10 11"><path d="M0.8 2.400h8.400M3.500 2.400V1h3v1.400" fill="none" stroke="#dfe5ec" stroke-width="1"/><path d="M1.800 3.600h6.400l-.5 6.600H2.300z" fill="#dfe5ec"/><path d="M3.800 4.600v4.600M5 4.600v4.600M6.200 4.600v4.600" stroke="#021b33" stroke-width="0.500"/></svg>
<svg style="left:13.8px;top:158.5px" width="9" height="6" viewBox="0 0 9 6"><path d="M0.8 0.9L4.500 4.800 8.200 0.900" fill="none" stroke="#dfe5ec" stroke-width="1.5"/></svg>
<svg style="left:29.5px;top:193.5px" width="9" height="6" viewBox="0 0 9 6"><path d="M0.8 0.9L4.500 4.800 8.200 0.900" fill="none" stroke="#dfe5ec" stroke-width="1.5"/></svg>
<svg style="left:31.6px;top:279.3px" width="6" height="9" viewBox="0 0 6 9"><path d="M0.9 0.8L4.800 4.500 0.900 8.200" fill="none" stroke="#dfe5ec" stroke-width="1.4"/></svg>
<svg style="left:13.8px;top:298.6px" width="9" height="6" viewBox="0 0 9 6"><path d="M0.8 0.9L4.500 4.800 8.200 0.900" fill="none" stroke="#dfe5ec" stroke-width="1.5"/></svg>
<svg style="left:13.8px;top:316px" width="9" height="6" viewBox="0 0 9 6"><path d="M0.8 0.9L4.500 4.800 8.200 0.900" fill="none" stroke="#dfe5ec" stroke-width="1.5"/></svg>
<svg style="left:13.8px;top:333.8px" width="9" height="6" viewBox="0 0 9 6"><path d="M0.8 0.9L4.500 4.800 8.200 0.900" fill="none" stroke="#dfe5ec" stroke-width="1.5"/></svg>
<svg style="left:13.8px;top:351.2px" width="9" height="6" viewBox="0 0 9 6"><path d="M0.8 0.9L4.500 4.800 8.200 0.900" fill="none" stroke="#dfe5ec" stroke-width="1.5"/></svg>
<svg style="left:139.3px;top:296.2px" width="10" height="10" viewBox="0 0 10 10"><path d="M5 0.500v9M0.500 5h9" stroke="#dfe5ec" stroke-width="1.200"/></svg>
<svg style="left:139.3px;top:348.7px" width="10" height="10" viewBox="0 0 10 10"><path d="M5 0.500v9M0.500 5h9" stroke="#dfe5ec" stroke-width="1.200"/></svg>
<svg style="left:27.5px;top:173.3px" width="12" height="10" viewBox="0 0 12 10"><path d="M2.600 0.800h6.800l1.800 4.400v3.600c0 .3-.2.500-.5.500H1.300c-.3 0-.5-.2-.5-.5V5.200z" fill="#dfe5ec"/><path d="M3.300 2.200h5.400l1 2.600H7.800l-.5 1.100H4.700l-.5-1.100H2.300z" fill="#021b33" opacity="0.800"/></svg>
<svg style="left:44px;top:208.7px" width="12" height="10" viewBox="0 0 12 10"><path d="M2.600 0.800h6.800l1.800 4.400v3.600c0 .3-.2.500-.5.500H1.300c-.3 0-.5-.2-.5-.5V5.200z" fill="#dfe5ec"/><path d="M3.300 2.200h5.400l1 2.600H7.800l-.5 1.100H4.700l-.5-1.100H2.300z" fill="#021b33" opacity="0.800"/></svg>
<svg style="left:44px;top:226.3px" width="12" height="10" viewBox="0 0 12 10"><path d="M2.600 0.800h6.800l1.800 4.400v3.600c0 .3-.2.500-.5.500H1.300c-.3 0-.5-.2-.5-.5V5.200z" fill="#dfe5ec"/><path d="M3.300 2.200h5.400l1 2.600H7.800l-.5 1.100H4.700l-.5-1.100H2.300z" fill="#021b33" opacity="0.800"/></svg>
<svg style="left:44px;top:243.7px" width="12" height="10" viewBox="0 0 12 10"><path d="M2.600 0.800h6.800l1.800 4.400v3.600c0 .3-.2.500-.5.500H1.300c-.3 0-.5-.2-.5-.5V5.200z" fill="#dfe5ec"/><path d="M3.300 2.200h5.400l1 2.600H7.800l-.5 1.100H4.700l-.5-1.100H2.300z" fill="#021b33" opacity="0.800"/></svg>
<svg style="left:44px;top:261.2px" width="12" height="10" viewBox="0 0 12 10"><path d="M2.600 0.800h6.800l1.800 4.400v3.600c0 .3-.2.500-.5.500H1.300c-.3 0-.5-.2-.5-.5V5.200z" fill="#dfe5ec"/><path d="M3.300 2.200h5.400l1 2.600H7.800l-.5 1.100H4.700l-.5-1.100H2.300z" fill="#021b33" opacity="0.800"/></svg>
<svg style="left:28px;top:365.7px" width="12" height="12" viewBox="0 0 12 12"><circle cx="6" cy="6" r="5.300" fill="#dfe5ec"/><path d="M0.700 6h10.600M6 0.700v10.600M2 3h8M2 9h8" stroke="#7f8ea0" stroke-width="0.500"/><ellipse cx="6" cy="6" rx="2.500" ry="5.300" fill="none" stroke="#7f8ea0" stroke-width="0.500"/></svg>
<svg style="left:28px;top:382.7px" width="12" height="12" viewBox="0 0 12 12"><circle cx="6" cy="6" r="5.300" fill="#dfe5ec"/><path d="M0.700 6h10.600M6 0.700v10.600M2 3h8M2 9h8" stroke="#7f8ea0" stroke-width="0.500"/><ellipse cx="6" cy="6" rx="2.500" ry="5.300" fill="none" stroke="#7f8ea0" stroke-width="0.500"/></svg>
<svg style="left:28px;top:400.3px" width="12" height="12" viewBox="0 0 12 12"><circle cx="6" cy="6" r="5.300" fill="#dfe5ec"/><path d="M0.700 6h10.600M6 0.700v10.600M2 3h8M2 9h8" stroke="#7f8ea0" stroke-width="0.500"/><ellipse cx="6" cy="6" rx="2.500" ry="5.300" fill="none" stroke="#7f8ea0" stroke-width="0.500"/></svg>
<svg style="left:28px;top:417.8px" width="12" height="12" viewBox="0 0 12 12"><circle cx="6" cy="6" r="5.300" fill="#dfe5ec"/><path d="M0.700 6h10.600M6 0.700v10.600M2 3h8M2 9h8" stroke="#7f8ea0" stroke-width="0.500"/><ellipse cx="6" cy="6" rx="2.500" ry="5.300" fill="none" stroke="#7f8ea0" stroke-width="0.500"/></svg>
<svg style="left:148px;top:533.5px" width="9" height="9" viewBox="0 0 9 9"><circle cx="3.600" cy="3.600" r="2.700" fill="none" stroke="#9fd0c0" stroke-width="1"/><path d="M5.600 5.600l3 3" stroke="#9fd0c0" stroke-width="1.100"/></svg>
<svg style="left:545px;top:136.6px" width="20" height="17.6" viewBox="0 0 20 17.6"><path d="M0.800 0.800h8v8L6 16.800H2.600l2-6.400H0.800zM11.200 0.800h8v8l-2.800 8H13l2-6.400h-3.800z" fill="#e6f1f0" stroke="#5f8f8b" stroke-width="1.300"/></svg>
<svg style="left:575.2px;top:135.8px" width="14" height="19.4" viewBox="0 0 14 19.4"><path d="M0.800 3.400h12.400v15.200H0.800z" fill="#c9ebe6" stroke="#4a938a" stroke-width="1.300"/><path d="M4.200 0.800h5.600v3.600H4.200z" fill="#e8f6f4" stroke="#4a938a" stroke-width="1.100"/><path d="M7 7.200v9M2.600 11.700h8.800" stroke="#23746b" stroke-width="1.700"/></svg>
<svg style="left:598.6px;top:135.4px" width="22" height="20" viewBox="0 0 22 20"><circle cx="8" cy="6.500" r="4.400" fill="none" stroke="#3f9a92" stroke-width="1.300"/><path d="M0.800 19.400c0-4.400 3-6.400 7.200-6.400s7.200 2 7.200 6.400z" fill="none" stroke="#3f9a92" stroke-width="1.300"/><path d="M17.600 0v6M14.600 3h6" stroke="#3f9a92" stroke-width="1.200"/></svg>
<svg style="left:629px;top:135px" width="18" height="21" viewBox="0 0 18 21"><path d="M3.800 1H16.600V14.600L12.300 11.300 4.600 19.600 0.600 16.200 8 7.800 3.400 5.200z" fill="#f3ecee" stroke="#3f8d84" stroke-width="1.400" stroke-linejoin="round"/></svg>
<svg style="left:655.4px;top:135.5px" width="16" height="20" viewBox="0 0 16 20"><path d="M0.900 0.900h9.600L15.100 5.500V18.800H0.900z" fill="#c9efea" stroke="#3f8d84" stroke-width="1.600" stroke-linejoin="round"/><path d="M10.200 1v4.800H15" fill="none" stroke="#3f8d84" stroke-width="1.300"/><circle cx="7" cy="9.300" r="2.500" fill="#e6f8f5" stroke="#3f8d84" stroke-width="1.300"/><path d="M8.800 11.200l2.800 3" stroke="#3f8d84" stroke-width="1.600"/></svg>
<svg style="left:680.5px;top:135.5px" width="20" height="19.3" viewBox="0 0 20 19.3"><ellipse cx="10" cy="9.600" rx="9.300" ry="8.900" fill="#c2efe9" stroke="#3f8d84" stroke-width="1.500"/><ellipse cx="10" cy="9.600" rx="4" ry="8.900" fill="none" stroke="#3f8d84" stroke-width="1.300"/><path d="M10 0.700v17.800M0.700 9.600h18.600M2.300 5h15.400M2.300 14.200h15.400" stroke="#3f8d84" stroke-width="1.300"/></svg>
<svg style="left:533.2px;top:122.8px" width="43.4" height="43.4" viewBox="-21.70 -21.70 43.40 43.40"><circle r="19.50" fill="none" stroke="#a8e6a0" stroke-width="1.200" opacity="0.800"/><circle r="18.55" fill="rgba(255,255,255,0.5)" stroke="#ae78e2" stroke-width="1.900"/></svg>
<svg style="left:586.0px;top:121.9px" width="44.5" height="44.5" viewBox="-22.25 -22.25 44.50 44.50"><circle r="20.05" fill="none" stroke="#a8e6a0" stroke-width="1.200" opacity="0.800"/><circle r="19.10" fill="rgba(255,255,255,0.5)" stroke="#ae78e2" stroke-width="1.900"/></svg>
<div class="num" style="left:126.0px;top:52.0px">4</div>
<div class="num" style="left:126.3px;top:185.2px">2</div>
<div class="num" style="left:128.1px;top:372.4px">1</div>
<div class="num" style="left:534.1px;top:88.4px">3</div>
<div class="num" style="left:588.5px;top:160.2px">5</div>
<div class="num" style="left:931.1px;top:124.3px">6</div>
<svg style="left:173px;top:177px" width="9" height="10" viewBox="0 0 9 10"><path d="M2.2 6.2l3.4-3.6a1.3 1.3 0 0 1 1.9 1.8L3.6 8.5a2 2 0 0 1-2.9-2.8L4.4 1.8" fill="none" stroke="#bdbdbd" stroke-width="1.300"/></svg>
<svg style="left:303px;top:179.500px" width="7" height="5" viewBox="0 0 7 5"><path d="M0.800 4.200L3.500 1.200l2.700 3" fill="none" stroke="#9a9a9a" stroke-width="0.900"/></svg>
</div></body></html>
